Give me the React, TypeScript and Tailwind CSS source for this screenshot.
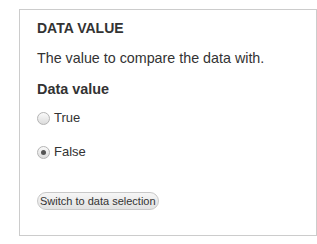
import React from "react";

function Radio({ checked }: { checked?: boolean }) {
  return (
    <span className="flex h-[13px] w-[13px] items-center justify-center rounded-full border border-[#b4b4b4] bg-gradient-to-b from-[#fafafa] to-[#dcdcdc]">
      {checked && <span className="h-[5px] w-[5px] rounded-full bg-[#555]" />}
    </span>
  );
}

export default function App() {
  return (
    <div className="bg-white w-[317px] h-[244px] pt-[9px] pl-[19px] text-[#333]" style={{ fontFamily: '"Liberation Sans", Arial, sans-serif' }}>
      <div className="w-[298px] border border-[#cccccc] pt-[8px] pl-[17px] pb-[25px]">
        <div className="text-[14px] leading-[20px] font-bold">DATA VALUE</div>
        <p className="mt-[10px] text-[14.3px] leading-[20px]">The value to compare the data with.</p>
        <div className="mt-[11px] text-[14.4px] leading-[20px] font-bold">Data value</div>
        <div className="mt-[9px] flex h-[20px] items-center gap-[4px] text-[13px]">
          <Radio />
          <span>True</span>
        </div>
        <div className="mt-[14px] flex h-[20px] items-center gap-[4px] text-[13px]">
          <Radio checked />
          <span>False</span>
        </div>
        <div className="mt-[30px] flex">
          <button className="rounded-full border border-[#c8c8c8] bg-gradient-to-b from-[#f6f6f6] to-[#e2e2e2] px-[2px] py-[1px] text-[11px] leading-[14px] text-[#333]">
            Switch to data selection
          </button>
        </div>
      </div>
    </div>
  );
}
